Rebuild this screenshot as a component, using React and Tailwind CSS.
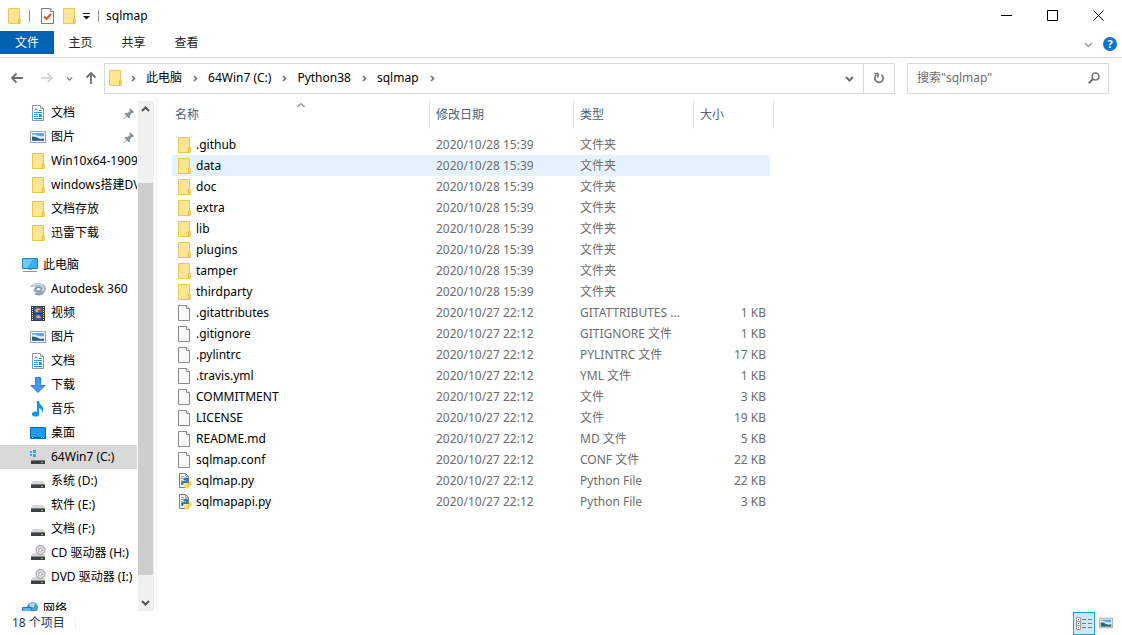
import { useState } from 'react'

const folders = ['.github', 'data', 'doc', 'extra', 'lib', 'plugins', 'tamper', 'thirdparty']

const files = [
  ...folders.map(name => ({ name, icon: 'folder', date: '2020/10/28 15:39', type: '文件夹', size: '' })),
  { name: '.gitattributes', icon: 'file', date: '2020/10/27 22:12', type: 'GITATTRIBUTES ...', size: '1 KB' },
  { name: '.gitignore', icon: 'file', date: '2020/10/27 22:12', type: 'GITIGNORE 文件', size: '1 KB' },
  { name: '.pylintrc', icon: 'file', date: '2020/10/27 22:12', type: 'PYLINTRC 文件', size: '17 KB' },
  { name: '.travis.yml', icon: 'file', date: '2020/10/27 22:12', type: 'YML 文件', size: '1 KB' },
  { name: 'COMMITMENT', icon: 'file', date: '2020/10/27 22:12', type: '文件', size: '3 KB' },
  { name: 'LICENSE', icon: 'file', date: '2020/10/27 22:12', type: '文件', size: '19 KB' },
  { name: 'README.md', icon: 'file', date: '2020/10/27 22:12', type: 'MD 文件', size: '5 KB' },
  { name: 'sqlmap.conf', icon: 'file', date: '2020/10/27 22:12', type: 'CONF 文件', size: '22 KB' },
  { name: 'sqlmap.py', icon: 'python', date: '2020/10/27 22:12', type: 'Python File', size: '22 KB' },
  { name: 'sqlmapapi.py', icon: 'python', date: '2020/10/27 22:12', type: 'Python File', size: '3 KB' },
]

const quickAccess = [
  { label: '文档', icon: 'document', pinned: true },
  { label: '图片', icon: 'picture', pinned: true },
  { label: 'Win10x64-1909', icon: 'folder' },
  { label: 'windows搭建DVWA', icon: 'folder' },
  { label: '文档存放', icon: 'folder' },
  { label: '迅雷下载', icon: 'folder' },
]

const thisPc = [
  { label: 'Autodesk 360', icon: 'autodesk' },
  { label: '视频', icon: 'video' },
  { label: '图片', icon: 'picture' },
  { label: '文档', icon: 'document' },
  { label: '下载', icon: 'download' },
  { label: '音乐', icon: 'music' },
  { label: '桌面', icon: 'desktop' },
  { label: '64Win7 (C:)', icon: 'systemDrive' },
  { label: '系统 (D:)', icon: 'drive' },
  { label: '软件 (E:)', icon: 'drive' },
  { label: '文档 (F:)', icon: 'drive' },
  { label: 'CD 驱动器 (H:)', icon: 'disc' },
  { label: 'DVD 驱动器 (I:)', icon: 'disc' },
]

const driveBody = (
  <>
    <path d="M3 8h10l2 3H1z" fill="#d3d6d8" />
    <path d="M1 11h14v4H1z" fill="#3c4043" />
    <path d="M1 11h14v1H1z" fill="#77797b" />
    <path d="M11 13h2v1h-2z" fill="#4fe05a" />
  </>
)

const drawings = {
  folder: (
    <>
      <path d="M2.500.5h11v9l.5 1v5H2.500z" fill="#ffe594" stroke="#ecc850" />
      <path d="M12.500 15.500v-5l1-1 .500 1v5z" fill="#ffe08a" stroke="#e6be45" />
    </>
  ),
  file: (
    <>
      <path d="M2.500.5h8l3 3v12h-11z" fill="#f8f9fa" stroke="#8a8a8a" />
      <path d="M10.500.5v3h3" fill="#fff" stroke="#8a8a8a" />
    </>
  ),
  python: (
    <>
      <path d="M3.500.5h6l3 3v11h-9z" fill="#f4f4f4" stroke="#7c7c7c" />
      <path d="M9.500.5v3h3M5 3.500h3M5 5.500h3M5 7.500h1M5 9.500h1M5 11.500h1" fill="none" stroke="#9a9a9a" />
      <path d="M7.500 6q0-1.500 2.500-1.500T12.500 6v3q0 1-1 1h-3q-1.500 0-1.500 2H6Q5 12 5 10t1.500-2H10V7.500H7.500z" fill="#3a77ad" />
      <path d="M13 7.500h1.500q1.200 0 1.200 2.500t-1.200 2.500H11v.5h2.500v1.200q0 1.300-2.500 1.300T8.500 14v-2q0-1.500 1.500-1.500h2q1 0 1-1.500z" fill="#ffd848" />
    </>
  ),
  checkFile: (
    <>
      <path d="M1.500.5h9l3 3v12h-12z" fill="#fafafa" stroke="#7c7c7c" />
      <path d="M10.500.5v3h3" fill="#fff" stroke="#8c8c8c" />
      <path d="M4 8.500l2.500 2.500L11 6" fill="none" stroke="#e8541e" strokeWidth="2" />
    </>
  ),
  document: (
    <>
      <path d="M2.500.5h8l3 3v12h-11z" fill="#fff" stroke="#8f989e" />
      <path d="M10.500.5v3h3" fill="#fff" stroke="#8f989e" />
      <path d="M4.500 5.500l1.500-2 1.500 2M9 5.500h3M4 7.500h8M4 9.500h4M4 11.500h4M4 13.500h8" fill="none" stroke="#2f8fd0" />
      <path d="M9 9h3v3H9z" fill="#3f9bc9" />
    </>
  ),
  picture: (
    <>
      <path d="M.5 2.500h15v11H.5z" fill="#fff" stroke="#9aa0a4" />
      <path d="M2 4h12v8H2z" fill="#5fa8e6" />
      <path d="M2 6q2-1.500 4 0t8 1v3H2z" fill="#d7ebf7" />
      <path d="M2 7.500q4 0 6 1.500t6 .5V12H2z" fill="#33634d" />
      <path d="M2 11h12v1H2z" fill="#3b83ad" />
    </>
  ),
  computer: (
    <>
      <path d="M.5 1.500h15v10H.5z" fill="#35b1f5" stroke="#2880b4" />
      <path d="M1 2h10l-6 9H1z" fill="#6dcbfb" />
      <path d="M6 12h4v1H6z" fill="#9fb4c2" />
      <path d="M1 14.500h14" stroke="#7e99ab" />
    </>
  ),
  autodesk: (
    <>
      <path d="M0 6.500q2-4 7-4.500 8 0 9 5 0 4-4 7-5 1.500-9-1.500 3 .5 4-.5Q3.500 11 3.500 8.500 4 6.500 6 5.500 3 5 0 6.500z" fill="#9db6c3" />
      <path d="M3 4.500q5-2.500 9 0 3 3 0 5.500" fill="none" stroke="#cfdfe6" strokeWidth="1.500" />
      <ellipse cx="8.500" cy="8.300" rx="2.800" ry="1.800" fill="#eef4f7" stroke="#5b7f90" />
      <path d="M5 13q4.500 1.500 8-2" fill="none" stroke="#6f93a4" />
    </>
  ),
  video: (
    <>
      <path d="M1 1h14v15H1z" fill="#3b3b3b" />
      <path d="M2.500 2v13M13.500 2v13" stroke="#f2f2f2" strokeDasharray="1 1" />
      <path d="M4 2h8v6H4z" fill="#3564bb" />
      <path d="M4 9h8v6H4z" fill="#2e55a8" />
      <path d="M5 5l3-2 3 2-2 2H6zM6 11l3-1 2 3H7z" fill="#eab231" />
      <path d="M8 5h3v2H8zM5 13h3v1H5z" fill="#c7462e" />
    </>
  ),
  download: <path d="M5.500.5h5v8h4.500L8 15.500 1 8.500h4.500z" fill="#3b9bea" stroke="#2a7fca" />,
  music: (
    <>
      <path d="M7 0h2q0 3 3 5 2.500 3 0 7 .5-4-3-5v6H7z" fill="#0f94ea" />
      <ellipse cx="5.500" cy="13" rx="3.500" ry="2.600" fill="#0f94ea" />
    </>
  ),
  desktop: (
    <>
      <path d="M.5 2.500h15v11H.5z" fill="#1c9bf5" stroke="#0f6cae" />
      <path d="M1 12h14v1H1z" fill="#0c548c" />
      <path d="M2 12h1v1H2zM11 12h1v1h-1zM13 12h1v1h-1z" fill="#fff" />
    </>
  ),
  drive: driveBody,
  systemDrive: (
    <>
      {driveBody}
      <path d="M0 1h6v7H0z" fill="#d9d9d9" />
      <path d="M0 2h2v2H0zM3 1h3v3H3zM0 5h2v2H0zM3 5h3v3H3z" fill="#19b5ea" />
    </>
  ),
  disc: (
    <>
      {driveBody}
      <circle cx="10.500" cy="5" r="4.500" fill="#dcdfe0" stroke="#92979a" />
      <circle cx="10.500" cy="5" r="1.700" fill="#fff" stroke="#9ca0a3" />
      <path d="M1 11h14v1H1z" fill="#8f9193" />
    </>
  ),
  network: (
    <>
      <circle cx="10.500" cy="6.500" r="5.500" fill="#4a9cc4" />
      <path d="M7 3q4-3 6 0l-1 3-3 1z" fill="#a9d9ea" />
      <path d="M.5 6.500h9v6h-9z" fill="#4bb8f2" stroke="#2479ac" />
    </>
  ),
  pin: (
    <>
      <path d="M7 1l4 4-1 1-1 0-2 2.500.2 2-1.200 1L1.500 7l1-1.200 2 .2L7 4 6.500 2z" fill="#87939b" />
      <path d="M3.500 9L.5 12" stroke="#87939b" />
    </>
  ),
}

function Icon({ name, className = 'w-4 h-4', viewBox = '0 0 16 16' }) {
  return (
    <svg viewBox={viewBox} className={`shrink-0 ${className}`} aria-hidden="true">
      {drawings[name]}
    </svg>
  )
}

const chevrons = {
  right: 'M3 2l2.500 2.500L3 7',
  down: 'M1 3l3.500 3.500L8 3',
  up: 'M1 6l3.500-3.500L8 6',
}

function Chevron({ dir, className = 'w-[9px] h-[9px] text-[#6f6f6f]', weight = 1.6 }) {
  return (
    <svg viewBox="0 0 9 9" className={`shrink-0 ${className}`} aria-hidden="true">
      <path d={chevrons[dir]} fill="none" stroke="currentColor" strokeWidth={weight} />
    </svg>
  )
}

function Arrow({ dir }) {
  const d = {
    left: 'M13 7H2M6.500 2.500L2 7l4.500 4.500',
    right: 'M1 7h11M7.500 2.500L12 7l-4.500 4.500',
    up: 'M7 13V2M2.500 6.500L7 2l4.500 4.500',
  }
  return (
    <svg viewBox="0 0 14 14" className="w-3.5 h-3.5" aria-hidden="true">
      <path d={d[dir]} fill="none" stroke="currentColor" strokeWidth="1.800" />
    </svg>
  )
}

function TitleBar() {
  return (
    <header className="flex items-center h-[31px] shrink-0 pl-1.5 pr-px">
      <Icon name="folder" />
      <span className="w-px h-3 ml-[7px] bg-[#8c8c8c]" />
      <button aria-label="属性" className="ml-2.5"><Icon name="checkFile" /></button>
      <button aria-label="新建文件夹" className="ml-[5px]"><Icon name="folder" /></button>
      <button aria-label="自定义快速访问工具栏" className="ml-[5px]">
        <svg viewBox="0 0 9 8" className="w-[9px] h-2" aria-hidden="true">
          <path d="M1 1.500h7" stroke="#111" />
          <path d="M1 4h7L4.500 7.500z" fill="#111" />
        </svg>
      </button>
      <span className="w-px h-3 ml-[7px] bg-[#8c8c8c]" />
      <h1 className="ml-[7px] text-xs">sqlmap</h1>
      <div className="flex ml-auto h-full">
        <button aria-label="最小化" className="w-[46px] flex items-center justify-center">
          <svg viewBox="0 0 11 11" className="w-[11px] h-[11px]"><path d="M0 5.500h11" stroke="#000" /></svg>
        </button>
        <button aria-label="最大化" className="w-[46px] flex items-center justify-center">
          <svg viewBox="0 0 11 11" className="w-[11px] h-[11px]"><path d="M.5.5h10v10H.5z" fill="none" stroke="#000" /></svg>
        </button>
        <button aria-label="关闭" className="w-[46px] flex items-center justify-center">
          <svg viewBox="0 0 11 11" className="w-[11px] h-[11px]"><path d="M.5.5l10 10M10.500.5l-10 10" stroke="#000" /></svg>
        </button>
      </div>
    </header>
  )
}

function Ribbon() {
  return (
    <nav className="flex items-start h-[27px] shrink-0 border-b border-[#dadbdc] text-[#222]">
      <button className="w-[54px] h-[23px] bg-[#0063b1] text-white">文件</button>
      <button className="w-[53px] h-6">主页</button>
      <button className="w-[53px] h-6">共享</button>
      <button className="w-[53px] h-6">查看</button>
      <div className="flex items-center gap-2.5 ml-auto h-[26px] pr-[5px]">
        <button aria-label="展开功能区">
          <Chevron dir="down" weight={1.5} className="w-[9px] h-[9px] text-[#9a9a9a]" />
        </button>
        <button aria-label="帮助" className="w-3.5 h-3.5 rounded-full bg-[#0a74d1] text-white text-[11px] leading-[14px] font-bold">?</button>
      </div>
    </nav>
  )
}

function AddressBar() {
  const path = ['此电脑', '64Win7 (C:)', 'Python38', 'sqlmap']
  return (
    <div className="flex items-center h-10 shrink-0 pl-2.5 pr-[13px] text-[#707070]">
      <button aria-label="后退"><Arrow dir="left" /></button>
      <button aria-label="前进" className="ml-4 text-[#d5d5d5]"><Arrow dir="right" /></button>
      <button aria-label="最近位置" className="ml-3"><Chevron dir="down" className="w-[7px] h-[7px] text-[#777]" /></button>
      <button aria-label="上移" className="ml-[11px] mr-1.5"><Arrow dir="up" /></button>
      <div className="flex flex-1 items-center h-[31px] border border-[#d9d9d9] pl-0.5">
        <Icon name="folder" />
        <Chevron dir="right" className="w-[9px] h-[9px] ml-1.5 text-[#6f6f6f]" />
        {path.map(part => (
          <span key={part} className="flex items-center">
            <button className="ml-2 mr-[9px] text-black">{part}</button>
            <Chevron dir="right" />
          </span>
        ))}
        <button aria-label="以前的位置" className="ml-auto w-7 h-full flex items-center justify-center">
          <Chevron dir="down" weight={2} />
        </button>
        <button aria-label="刷新" className="w-[31px] h-full flex items-center justify-center border-l border-[#d9d9d9]">
          <svg viewBox="0 0 12 12" className="w-3 h-3" aria-hidden="true">
            <path d="M8.500 2.800a4.200 4.200 0 1 1-5 0M1.500 1.500H5V5.500" fill="none" stroke="currentColor" strokeWidth="1.600" />
          </svg>
        </button>
      </div>
      <label className="flex items-center w-[202px] h-[31px] ml-3 pl-[9px] pr-2 border border-[#d9d9d9]">
        <input
          aria-label="搜索"
          placeholder={'搜索"sqlmap"'}
          className="flex-1 min-w-0 outline-none placeholder-[#6d6d6d]"
        />
        <svg viewBox="0 0 12 12" className="w-3 h-3" aria-hidden="true">
          <circle cx="7.500" cy="4.500" r="3.500" fill="none" stroke="currentColor" strokeWidth="1.500" />
          <path d="M5 7L.8 11.200" stroke="currentColor" strokeWidth="2" />
        </svg>
      </label>
    </div>
  )
}

function TreeItem({ item, root, selected, onSelect }) {
  return (
    <li>
      <button
        onClick={() => onSelect(item.label)}
        className={`flex items-center w-full h-6 whitespace-nowrap ${root ? 'pl-[22px]' : 'pl-[30px]'} ${selected ? 'bg-[#d9d9d9]' : ''}`}
      >
        <Icon name={item.icon} />
        <span className="ml-[5px]">{item.label}</span>
        {item.pinned && <Icon name="pin" viewBox="0 0 12 12" className="w-3 h-3 ml-auto mr-0.5" />}
      </button>
    </li>
  )
}

function Sidebar() {
  const [selected, setSelected] = useState('64Win7 (C:)')
  return (
    <aside className="flex w-[157px] shrink-0 border-r border-[#f3f3f3]">
      <div className="w-[137px] overflow-hidden pt-[3px]">
        <ul>
          {quickAccess.map(item => <TreeItem key={item.label} item={item} onSelect={setSelected} />)}
        </ul>
        <ul className="mt-2">
          <TreeItem root item={{ label: '此电脑', icon: 'computer' }} onSelect={setSelected} />
          {thisPc.map(item => (
            <TreeItem key={item.label} item={item} selected={item.label === selected} onSelect={setSelected} />
          ))}
        </ul>
        <ul className="mt-2">
          <TreeItem root item={{ label: '网络', icon: 'network' }} onSelect={setSelected} />
        </ul>
      </div>
      <div className="flex flex-col w-4 ml-px mt-[3px] bg-[#f0f0f0]">
        <button aria-label="向上滚动" className="flex items-center justify-center w-[15px] h-[17px]">
          <Chevron dir="up" weight={2} className="w-[9px] h-[9px] text-[#555]" />
        </button>
        <div className="grow-[65]" />
        <div className="grow-[393] w-[15px] bg-[#cdcdcd]" />
        <div className="grow-[19]" />
        <button aria-label="向下滚动" className="flex items-center justify-center w-[15px] h-[17px]">
          <Chevron dir="down" weight={2} className="w-[9px] h-[9px] text-[#555]" />
        </button>
      </div>
    </aside>
  )
}

function FileList() {
  const [hovered, setHovered] = useState('data')
  return (
    <main className="flex-1 min-w-0 overflow-hidden pl-[15px] pt-[3px]">
      <table className="table-fixed w-[602px] border-separate border-spacing-0 text-left text-[#6d6d6d]">
        <colgroup>
          <col className="w-[258px]" />
          <col className="w-36" />
          <col className="w-[120px]" />
          <col className="w-[76px]" />
          <col className="w-1" />
        </colgroup>
        <thead className="text-[#4c607a]">
          <tr className="h-7">
            <th className="relative p-0 pl-[3px] font-normal border-r border-[#e2e2e2]">
              名称
              <Chevron dir="up" weight={1} className="w-[9px] h-[9px] absolute top-0 left-1/2 -translate-x-1/2 text-[#444]" />
            </th>
            <th className="p-0 pl-1.5 font-normal border-r border-[#e2e2e2]">修改日期</th>
            <th className="p-0 pl-1.5 font-normal border-r border-[#e2e2e2]">类型</th>
            <th className="p-0 pl-1.5 font-normal">大小</th>
            <td className="p-0 border-r border-[#e2e2e2]" />
          </tr>
        </thead>
        <tbody className="before:block before:h-[5px]">
          {files.map(f => (
            <tr key={f.name} onMouseEnter={() => setHovered(f.name)} className="h-[21px]">
              <td className={`p-0 pl-1 text-black ${hovered === f.name ? 'bg-[#e5f3ff]' : ''}`}>
                <div className="flex items-center h-[21px]">
                  <Icon name={f.icon} />
                  <span className="ml-1">{f.name}</span>
                </div>
              </td>
              <td className={`p-0 pl-1.5 ${hovered === f.name ? 'bg-[#e5f3ff]' : ''}`}>{f.date}</td>
              <td className={`p-0 pl-1.5 whitespace-nowrap ${hovered === f.name ? 'bg-[#e5f3ff]' : ''}`}>{f.type}</td>
              <td className={`p-0 pr-1 text-right ${hovered === f.name ? 'bg-[#e5f3ff]' : ''}`}>{f.size}</td>
              <td className="p-0" />
            </tr>
          ))}
        </tbody>
      </table>
    </main>
  )
}

function StatusBar() {
  return (
    <footer className="flex items-center h-6 shrink-0 pl-3 pr-[9px] text-[#1e395b]">
      <span>18 个项目</span>
      <span className="w-px h-3 ml-2.5 bg-[#f0f0f0]" />
      <button aria-label="详细信息" className="flex items-center justify-center w-[22px] h-[23px] ml-auto border border-[#26a0da] bg-[#cce8f6]">
        <svg viewBox="0 0 16 13" className="w-4 h-[13px] shrink-0" aria-hidden="true">
          <path d="M.5.5h4v12h-4z" fill="#fff" stroke="#9b9b9b" />
          <path d="M0 4.500h5M0 8.500h5" stroke="#9b9b9b" />
          <path d="M2 2h1v1H2z" fill="#555" />
          <path d="M2 6h1v1H2z" fill="#1687d9" />
          <path d="M2 10h1v1H2z" fill="#d33b2c" />
          <path d="M6 2.500h4M12 2.500h4M6 6.500h4M12 6.500h4M6 10.500h4M12 10.500h4" stroke="#777" />
        </svg>
      </button>
      <button aria-label="大缩略图" className="ml-1">
        <Icon name="picture" className="w-3.5 h-3.5" />
      </button>
    </footer>
  )
}

export default function App() {
  return (
    <div className="flex flex-col h-screen overflow-hidden bg-white text-black text-xs font-['Noto_Sans','Noto_Sans_CJK_SC',sans-serif]">
      <TitleBar />
      <Ribbon />
      <AddressBar />
      <div className="flex flex-1 min-h-0">
        <Sidebar />
        <FileList />
      </div>
      <StatusBar />
    </div>
  )
}
